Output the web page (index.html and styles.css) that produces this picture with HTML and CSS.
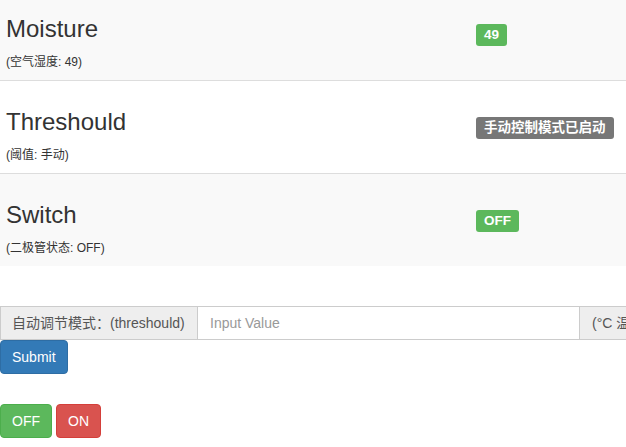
FILE: index.html
```html
<!DOCTYPE html>
<html lang="zh-CN">
<head>
<meta charset="utf-8">
<title>Sensor Panel</title>
<link rel="stylesheet" href="styles.css">
</head>
<body>
  <div class="status-table">
    <div class="row striped first">
      <div class="cell name">
        <h3>Moisture</h3>
        <div class="note"><small>(空气湿度: 49)</small></div>
      </div>
      <div class="cell value"><span class="label label-success">49</span></div>
    </div>
    <div class="row">
      <div class="cell name">
        <h3>Threshould</h3>
        <div class="note"><small>(阈值: 手动)</small></div>
      </div>
      <div class="cell value"><span class="label label-default">手动控制模式已启动</span></div>
    </div>
    <div class="row striped">
      <div class="cell name">
        <h3>Switch</h3>
        <div class="note"><small>(二极管状态: OFF)</small></div>
      </div>
      <div class="cell value"><span class="label label-success">OFF</span></div>
    </div>
  </div>

  <form class="threshold-form">
    <div class="input-clip">
      <div class="input-group">
        <span class="addon addon-left">自动调节模式：(threshould)</span>
        <input class="form-control" type="text" placeholder="Input Value">
        <span class="addon addon-right">(°C 温度)</span>
      </div>
    </div>
    <button type="button" class="btn btn-primary">Submit</button>
  </form>

  <div class="switch-buttons">
    <button type="button" class="btn btn-success">OFF</button>
    <button type="button" class="btn btn-danger">ON</button>
  </div>
</body>
</html>
```

FILE: styles.css
```css
html, body {
  margin: 0;
  padding: 0;
  overflow-x: hidden;
}
body {
  font-family: "Liberation Sans", "Noto Sans CJK SC", sans-serif;
  font-size: 14px;
  line-height: 20px;
  color: #333;
  background: #fff;
}

.status-table {
  margin-bottom: 40px;
}
.row {
  display: grid;
  grid-template-columns: 470px 1fr;
  border-top: 1px solid #ddd;
}
.row.first {
  border-top: none;
}
.row.striped {
  background: #f9f9f9;
}
.cell {
  padding: 8px 6px;
}
.name h3 {
  margin: 20px 0 10px;
  font-size: 24px;
  line-height: 26px;
  height: 26px;
  font-weight: normal;
  color: #333;
}
.row.first .name h3 {
  margin-top: 8px;
}
.note {
  height: 20px;
}
.note small {
  display: block;
  font-size: 12px;
  line-height: 20px;
  height: 20px;
  white-space: nowrap;
}
.value {
  display: flex;
  align-items: flex-start;
}

.label {
  display: block;
  margin-top: 28px;
  padding: 4px 8px;
  font-size: 13.5px;
  line-height: 14px;
  height: 14px;
  font-weight: bold;
  color: #fff;
  border-radius: 3px;
  white-space: nowrap;
}
.row.first .label {
  margin-top: 16px;
}
.label-success {
  background: #5cb85c;
}
.label-default {
  background: #777;
}

.threshold-form {
  margin: 0;
}
.input-clip {
  overflow: hidden;
}
.input-group {
  display: flex;
  width: max-content;
  height: 34px;
}
.addon {
  display: block;
  padding: 6px 12px;
  font-size: 14px;
  line-height: 20px;
  color: #555;
  background: #eee;
  border: 1px solid #ccc;
  white-space: nowrap;
  box-sizing: border-box;
  height: 34px;
}
.addon-left {
  border-right: none;
  width: 197px;
  padding-right: 0;
  padding-left: 11px;
}
.addon-right {
  border-left: 1px solid #ccc;
  width: 120px;
}
.form-control {
  display: block;
  width: 382px;
  height: 34px;
  box-sizing: border-box;
  padding: 6px 12px;
  font-family: "Liberation Sans", "Noto Sans CJK SC", sans-serif;
  font-size: 14px;
  line-height: 20px;
  color: #555;
  background: #fff;
  border: 1px solid #ccc;
  border-right: none;
  border-radius: 0;
  outline: none;
}
.form-control::placeholder {
  color: #999;
}

.btn {
  display: block;
  box-sizing: border-box;
  height: 34px;
  margin: 0;
  padding: 6px 11px;
  font-family: "Liberation Sans", "Noto Sans CJK SC", sans-serif;
  font-size: 14px;
  line-height: 20px;
  color: #fff;
  border: 1px solid transparent;
  border-radius: 4px;
  cursor: pointer;
}
.btn-primary {
  background: #337ab7;
  border-color: #2e6da4;
}
.btn-success {
  background: #5cb85c;
  border-color: #4cae4c;
}
.btn-danger {
  background: #d9534f;
  border-color: #d43f3a;
}

.switch-buttons {
  display: flex;
  gap: 4px;
  margin-top: 30px;
}
```
